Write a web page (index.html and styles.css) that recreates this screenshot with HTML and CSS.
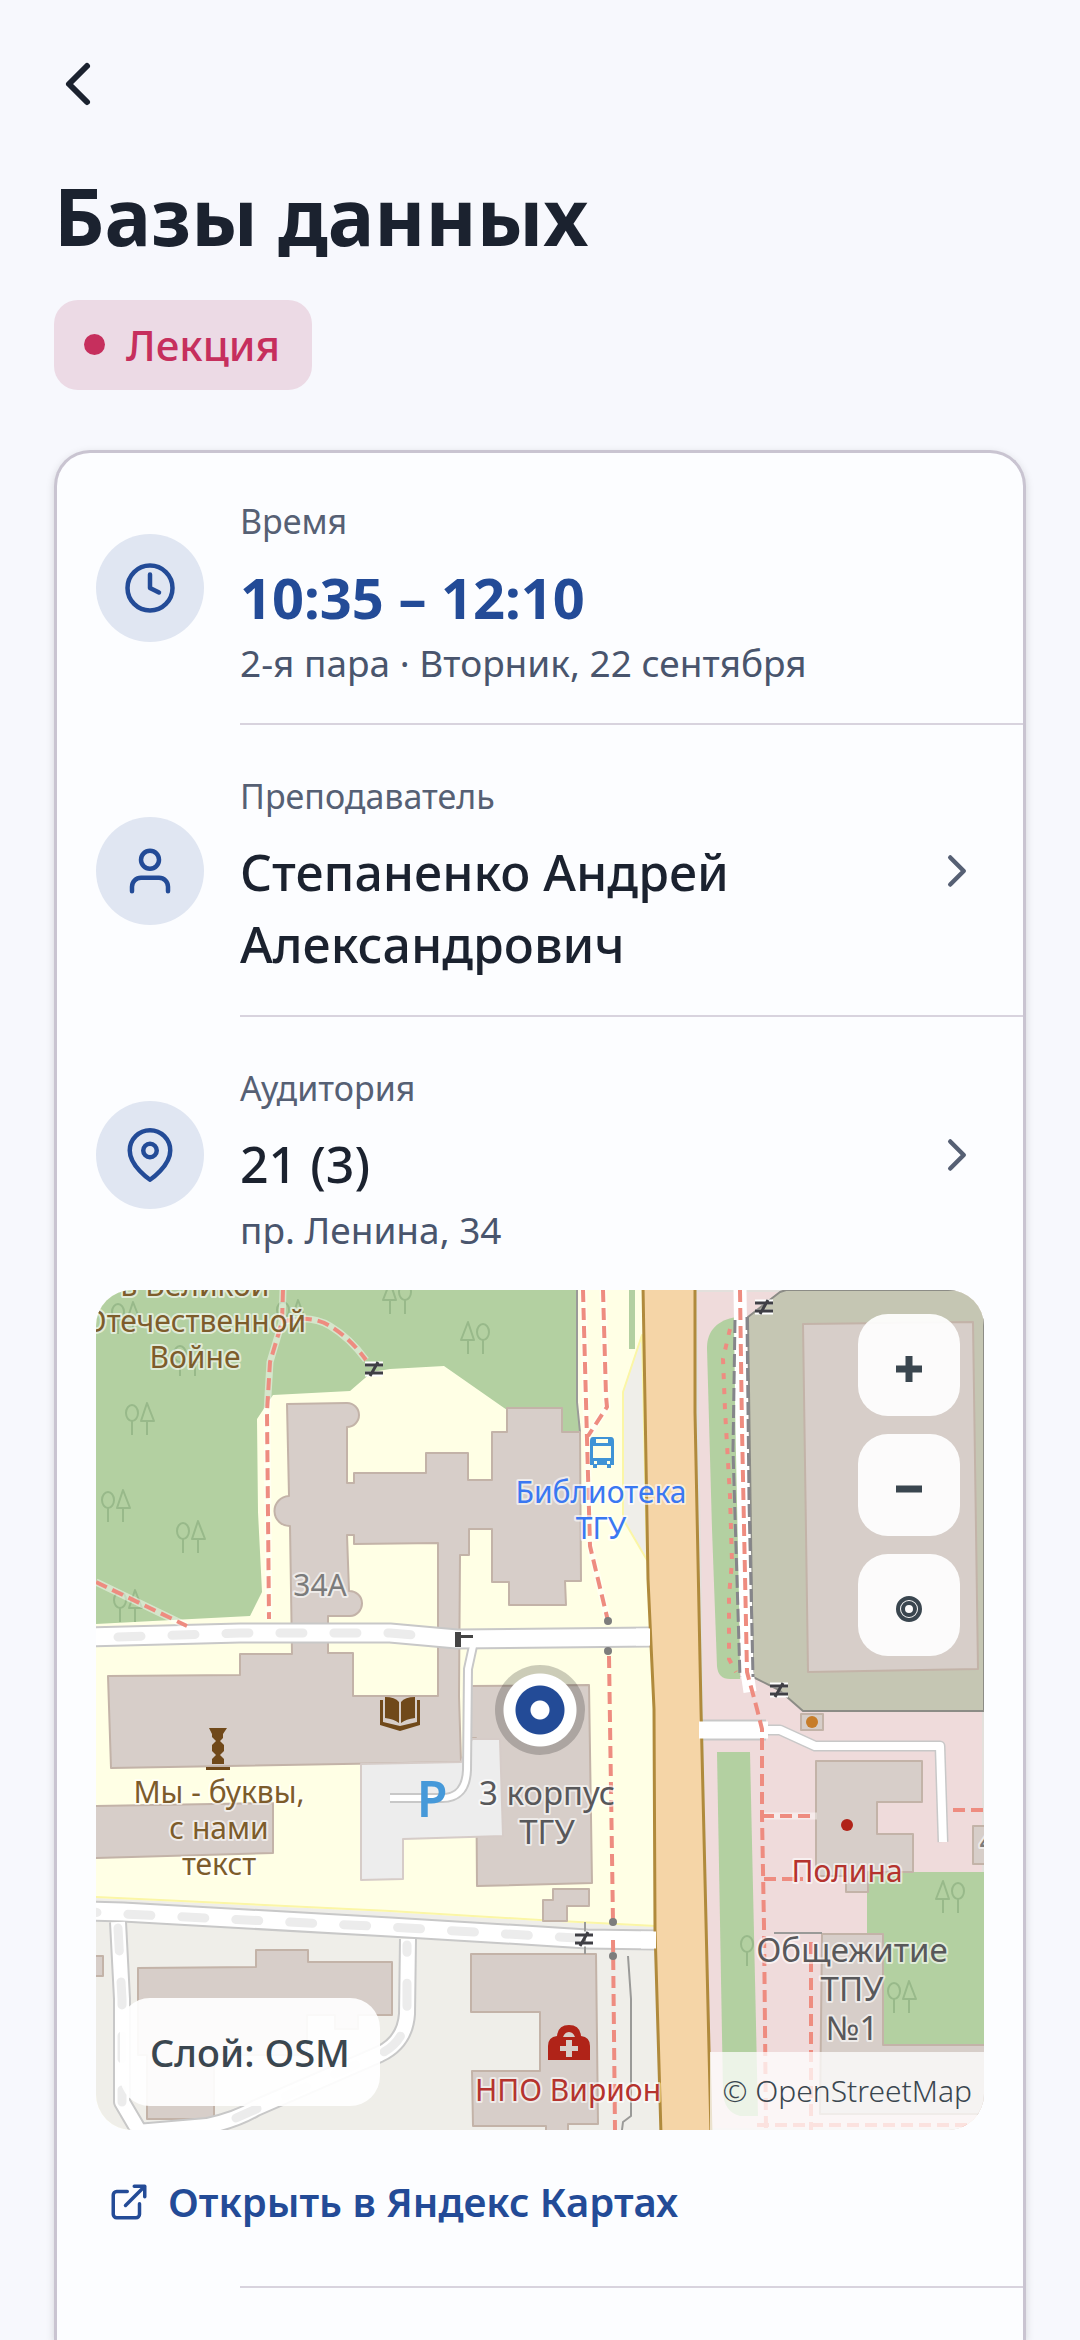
FILE: index.html
```html
<!DOCTYPE html>
<html lang="ru">
<head>
    <meta charset="UTF-8">
    <meta name="viewport" content="width=device-width, initial-scale=1.0">
    <title>Базы данных</title>
    <link rel="stylesheet" href="styles.css">
</head>
<body>
    <header class="page-header">
        <button class="back-button" type="button" aria-label="Назад">
            <svg viewBox="0 0 24 24"><path d="M15 18l-6-6 6-6"/></svg>
        </button>
        <h1>Базы данных</h1>
        <span class="badge">Лекция</span>
    </header>

    <main class="card">
        <section class="row">
            <div class="row-icon">
                <svg viewBox="0 0 24 24"><circle cx="12" cy="12" r="10"/><path d="M12 6v6l4 2"/></svg>
            </div>
            <div class="row-text">
                <p class="label">Время</p>
                <p class="value time">10:35 – 12:10</p>
                <p class="sub">2-я пара · Вторник, 22 сентября</p>
            </div>
        </section>

        <hr class="divider">

        <a class="row" href="#teacher">
            <div class="row-icon">
                <svg viewBox="0 0 24 24"><path d="M20 21v-2a4 4 0 0 0-4-4H8a4 4 0 0 0-4 4v2"/><circle cx="12" cy="7" r="4"/></svg>
            </div>
            <div class="row-text">
                <p class="label">Преподаватель</p>
                <p class="value">Степаненко Андрей Александрович</p>
            </div>
            <svg class="chevron" viewBox="0 0 24 24"><path d="M9 18l6-6-6-6"/></svg>
        </a>

        <hr class="divider">

        <a class="row" href="#room">
            <div class="row-icon">
                <svg viewBox="0 0 24 24"><path d="M21 10c0 7-9 13-9 13s-9-6-9-13a9 9 0 0 1 18 0z"/><circle cx="12" cy="10" r="3"/></svg>
            </div>
            <div class="row-text">
                <p class="label">Аудитория</p>
                <p class="value">21 (3)</p>
                <p class="sub">пр. Ленина, 34</p>
            </div>
            <svg class="chevron" viewBox="0 0 24 24"><path d="M9 18l6-6-6-6"/></svg>
        </a>

        <div class="map">
            <svg class="map-tiles" viewBox="0 0 888 840" preserveAspectRatio="xMidYMid slice">
                <defs>
                    <g id="trees" class="tree">
                        <ellipse rx="6" ry="8"/><path d="M0 8v14M15-10l-6 18h13zM15 8v14"/>
                    </g>
                    <g id="gate">
                        <path class="gate-bg" d="M-9-5H9M-9 5H9"/>
                        <path class="gate-line" d="M-9-4H9M-9 4H9M-4 7L4-7"/>
                    </g>
                </defs>

                <!-- участки -->
                <rect class="campus" width="888" height="840"/>
                <path class="land" d="M0 608L294 622 444 631 565 637V840H0z"/>
                <path class="campus-edge" d="M0 607L294 621 444 630 560 636"/>
                <path class="park" d="M0 0H481V110L484 142H411V120L348 76 294 79 276 82 254 101 177 105 161 129 162 222 166 302 154 326 57 331 0 334z"/>
                <path class="fence" d="M481 0V112L484 142"/>
                <path class="park" d="M533 0H539V59H533z"/>
                <path class="land campus-edge" d="M546 45L527 102V229L551 270z"/>
                <path class="pink" d="M599 0H888V840H612z"/>
                <path class="park" d="M640 27C622 30 611 40 611 58L616 239 621 376Q622 389 634 389H644L640 27z"/>
                <path class="stadium" d="M652 27L684 2 690 0H888V421H707L683 400 657 387z"/>
                <path class="park" d="M621 462H654L662 826H644Q628 822 627 802z"/>
                <path class="park" d="M771 582H888V755H786V644H771z"/>

                <!-- деревья -->
                <use href="#trees" x="22" y="22"/>
                <use href="#trees" x="187" y="20"/>
                <use href="#trees" x="84" y="64"/>
                <use href="#trees" x="36" y="123"/>
                <use href="#trees" x="12" y="210"/>
                <use href="#trees" x="87" y="241"/>
                <use href="#trees" x="24" y="310"/>
                <use href="#trees" x="798" y="701"/>
                <use href="#trees" transform="translate(309 2) scale(-1 1)"/>
                <use href="#trees" transform="translate(387 42) scale(-1 1)"/>
                <use href="#trees" transform="translate(862 601) scale(-1 1)"/>
                <ellipse class="tree" cx="651" cy="654" rx="6" ry="8"/>
                <path class="tree" d="M651 662v14"/>

                <!-- здания -->
                <g class="building">
                    <path fill-rule="evenodd" d="M191 114L251 113A12 12 0 0 1 251 137V193H258V183H330V163H372V190H396V142H411V118H466V142H484L485 291H469L470 315H413V292H396V239H373V265H364L363 406 365 472 15 478 12 386 144 385V364H196L194 236A15 15 0 0 1 193 206zM251 245L253 301A12 12 0 0 1 254 326H232V363H257V406H342V253L258 254V245z"/>
                    <path d="M374 396L493 395 496 593 381 596 380 448H374z"/>
                    <path d="M457 599H493V616H471V631H447V610H457z"/>
                    <path d="M-4 516L177 513V563L-4 568z"/>
                    <path d="M42 678L160 677V660H212V672H296V725H262V739H239V725H211V765H118V829H51V765H42z"/>
                    <path d="M-4 666H7V686H-4z"/>
                    <path d="M375 664H500L502 834H472V844H450V836H377L376 781H444V722H375z"/>
                    <path d="M707 34L877 32 882 379 712 382z"/>
                    <path d="M705 424h22v16h-22z"/>
                    <path d="M720 471H826V512H781V544H817V582H772V602H750V586H720z"/>
                    <path d="M726 644H787V755H892V824H724z"/>
                    <path d="M877 536H892V574H877z"/>
                </g>
                <path class="parking" d="M265 474L365 472 376 449H404L407 546 307 549V589L265 590z"/>

                <!-- проезды -->
                <g class="casing">
                    <path class="w18" d="M-8 347L144 343H294L361 349 554 347M-8 621L27 622 294 637 444 646 491 649 560 650"/>
                    <path class="w14" d="M22 632L26 709V812L46 846M41 842L111 836Q140 830 160 818L284 764Q309 752 311 724L312 649"/>
                    <path class="w6" d="M377 356L372 379 371 480Q370 508 346 508H294"/>
                    <path class="w8" d="M672 440H684L719 456H844L847 552"/>
                    <path class="w18" d="M604 440H670"/>
                </g>
                <g class="street">
                    <path class="w18" d="M-8 347L144 343H294L361 349 554 347M-8 621L27 622 294 637 444 646 491 649 560 650"/>
                    <path class="w14" d="M22 632L26 709V812L46 846M41 842L111 836Q140 830 160 818L284 764Q309 752 311 724L312 649"/>
                    <path class="w6" d="M377 356L372 379 371 480Q370 508 346 508H294"/>
                    <path class="w8" d="M672 440H684L719 456H844L847 552"/>
                </g>
                <path class="track" d="M22 347L144 343H294L340 347M-22 621L27 624 294 637 444 646 480 648"/>
                <path class="track" d="M22 638L26 709V812M140 828L284 764Q309 752 311 724V655"/>

                <!-- проспект -->
                <path class="avenue" d="M547-4L552 289 558 419 559 639 565 844H615L605 419 599 122V-4z"/>
                <path class="street w18" d="M540 347H554M545 650H560M603 440H672"/>

                <!-- дорожки -->
                <path class="path-halo" d="M187 0L186 32 174 72 171 122 173 329M186 32Q214 24 234 36T270 70M0 292L91 336"/>
                <path class="path-halo" d="M487 0L491 149 494 256 512 331M507 0L510 106 511 117 492 146M666 526H721"/>
                <path class="path-halo wide" d="M644 0L646 139 651 382 654 402"/>
                <path class="wall" d="M639 30L637 160 644 387M651 27L653 210 657 387"/>
                <path class="footway" d="M187 0L186 32 174 72 171 122 173 329M186 32Q214 24 234 36T270 70M0 292L91 336"/>
                <path class="footway" d="M487 0L491 149 494 256 512 331M507 0L510 106 511 117 492 146M513 366L517 632M517 650L519 840"/>
                <path class="footway" d="M644 0L646 139 651 382 661 419 666 439 666 526 668 636 670 840"/>
                <path class="footway" d="M666 526H716M668 589H707M715 652V840M857 520H888M661 835H888"/>
                <path class="dots" d="M634 39L627 69 629 120 634 206 636 272 633 306V369L640 382"/>
                <path class="fence" d="M532 666L535 709V826L527 832 526 840M678 643H726M489 632V664"/>

                <circle class="bollard" cx="512" cy="331" r="4"/>
                <circle class="bollard" cx="512" cy="361" r="4"/>
                <circle class="bollard" cx="517" cy="632" r="4"/>
                <circle class="bollard" cx="517" cy="666" r="4"/>
                <use href="#gate" x="278" y="79"/>
                <use href="#gate" x="668" y="17"/>
                <use href="#gate" x="683" y="400"/>
                <use href="#gate" x="488" y="649"/>
                <path class="barrier" d="M359 342h6v3h12v3h-12v9h-6z"/>

                <!-- значки -->
                <path class="bus" fill-rule="evenodd" d="M497 147h18q3 0 3 4v24h-3v3h-4v-3h-10v3h-4v-3h-3v-24q0-4 3-4zM500 149v4h12v-4zM497 156v12h18v-12zM498 171v3h3v-3zM511 171v3h3v-3z"/>
                <path class="brown" d="M113 438h18l-4 6v4l-3 3 4 4v6l-4 4 4 4v5h-12v-5l4-4-4-4v-6l4-4-4-4v-3zM110 477h24v3h-24z"/>
                <path class="brown" fill-rule="evenodd" d="M284 410h3v22l17 4 17-4v-22h3v25l-20 6-20-6zM289 407q10 0 14 5v21q-5-4-14-5zM305 412q4-5 14-5v21q-9 1-14 5z"/>
                <path class="medical" fill-rule="evenodd" d="M452 770V756Q452 747 461 746Q462 735 473 735T485 746Q494 747 494 756V770zM467 747h12q-2-5-6-5t-6 5zM470 750v6h-6v5h6v6h6v-6h6v-5h-6v-6z"/>
                <circle class="medical" cx="751" cy="535" r="6"/>
                <circle class="shop" cx="716" cy="432" r="6"/>

                <!-- подписи -->
                <g class="map-label place">
                    <text x="99" y="6">в Великой</text>
                    <text x="99" y="42">Отечественной</text>
                    <text x="99" y="78">Войне</text>
                    <text x="123" y="513">Мы - буквы,</text>
                    <text x="123" y="549">с нами</text>
                    <text x="123" y="585">текст</text>
                </g>
                <g class="map-label stop">
                    <text x="505" y="213">Библиотека</text>
                    <text x="505" y="249">ТГУ</text>
                </g>
                <g class="map-label house">
                    <text class="number" x="224" y="306">34А</text>
                    <text x="451" y="515">3 корпус</text>
                    <text x="451" y="554">ТГУ</text>
                    <text x="756" y="672">Общежитие</text>
                    <text x="756" y="711">ТПУ</text>
                    <text x="756" y="750">№1</text>
                    <text class="number" x="892" y="562">4</text>
                </g>
                <g class="map-label health">
                    <text x="472" y="811">НПО Вирион</text>
                    <text x="751" y="592">Полина</text>
                </g>
                <text class="parking-sign" x="336" y="527">P</text>
            </svg>

            <span class="marker"></span>

            <div class="map-controls">
                <button type="button" aria-label="Приблизить">
                    <svg viewBox="0 0 26 26"><path d="M13 0v26M0 13h26"/></svg>
                </button>
                <button type="button" aria-label="Отдалить">
                    <svg viewBox="0 0 26 26"><path d="M0 13h26"/></svg>
                </button>
                <button type="button" aria-label="К метке">
                    <svg class="target" viewBox="0 0 26 26"><circle cx="13" cy="13" r="11"/><circle cx="13" cy="13" r="6"/></svg>
                </button>
            </div>

            <button class="layer-button" type="button">Слой: OSM</button>
            <span class="attribution">© OpenStreetMap</span>
        </div>

        <a class="map-link" href="#yandex">
            <svg viewBox="0 0 24 24"><path d="M18 13v6a2 2 0 0 1-2 2H5a2 2 0 0 1-2-2V8a2 2 0 0 1 2-2h6M15 3h6v6M10 14L21 3"/></svg>
            Открыть в Яндекс Картах
        </a>

        <hr class="divider">
    </main>
</body>
</html>
```
FILE: styles.css
```css
* {
    margin: 0;
    padding: 0;
    box-sizing: border-box;
}

body {
    font-family: "Noto Sans", "Open Sans", sans-serif;
    display: flex;
    flex-direction: column;
    min-height: 100vh;
    padding: 48px 54px 0;
    background-color: #f7f8fd;
    color: #1b222f;
}

button {
    border: none;
    background: none;
    font-family: inherit;
    cursor: pointer;
}

a {
    color: inherit;
    text-decoration: none;
}

svg {
    display: block;
    fill: none;
    stroke: currentColor;
    stroke-width: 2;
    stroke-linecap: round;
    stroke-linejoin: round;
}

/* Шапка */
.page-header {
    display: flex;
    flex-direction: column;
    align-items: flex-start;
    margin-bottom: 60px;
}

.back-button {
    margin: 0 0 48px -12px;
    color: inherit;
}

.back-button svg {
    width: 72px;
    height: 72px;
}

h1 {
    font-size: 78px;
    line-height: 96px;
    font-weight: 700;
    margin-bottom: 36px;
}

.badge {
    display: flex;
    align-items: center;
    gap: 21px;
    height: 90px;
    padding: 0 32px 2px 30px;
    border-radius: 24px;
    background-color: #ecdae5;
    color: #c62f5d;
    font-size: 42px;
    font-weight: 500;
}

.badge::before {
    content: "";
    width: 21px;
    height: 21px;
    border-radius: 50%;
    background-color: #c62f5d;
}

/* Карточка */
.card {
    flex: 1;
    border: 3px solid #c9c4d1;
    border-bottom: none;
    border-radius: 36px 36px 0 0;
    background-color: #fcfdff;
    box-shadow: 0 3px 9px rgba(0, 0, 0, 0.15);
}

.row {
    display: flex;
    align-items: center;
    gap: 36px;
    padding: 37px 39px 35px;
}

.row:first-child {
    padding-top: 34px;
}

.row-icon {
    display: flex;
    align-items: center;
    justify-content: center;
    flex: none;
    width: 108px;
    height: 108px;
    border-radius: 50%;
    background-color: #e0e6f2;
    color: #234b97;
}

.row-icon svg,
.chevron {
    width: 54px;
    height: 54px;
}

.row-text {
    flex: 1;
    padding-top: 9px;
}

.label {
    margin-bottom: 14px;
    font-size: 34px;
    line-height: 51px;
    color: #566074;
}

.value {
    font-size: 50px;
    line-height: 72px;
    font-weight: 500;
}

.time {
    font-size: 56px;
    font-weight: 700;
    color: #234b97;
}

.sub {
    margin-top: 4px;
    font-size: 37px;
    line-height: 51px;
    color: #49556d;
}

.chevron {
    flex: none;
    color: #566074;
}

.divider {
    height: 2px;
    margin-left: 183px;
    border: none;
    background-color: #d8d3de;
}

/* Карта */
.map {
    position: relative;
    height: 840px;
    margin: 0 39px;
    border-radius: 36px;
    overflow: hidden;
}

.map-tiles {
    width: 100%;
    height: 100%;
    stroke: none;
    stroke-linecap: butt;
}

.campus { fill: #ffffe5; }
.campus-edge { stroke: #fbf6a6; }
.land { fill: #efeee9; }
.park { fill: #b3d0a1; }
.pink { fill: #efdbdb; stroke: #e3e0dc; stroke-width: 4; }
.stadium { fill: #c5c6b3; stroke: #8c8c86; }
.parking { fill: #ededed; stroke: #d6ccc8; }
.building { fill: #d7cec9; stroke: #c3b3a8; }
.avenue { fill: #f5d5a7; stroke: #b08a3c; stroke-width: 3; }
.tree { fill: none; stroke: #98b98a; }
.fence { stroke: #9a9a98; }

.w6 { stroke-width: 6; }
.w8 { stroke-width: 8; }
.w14 { stroke-width: 14; }
.w18 { stroke-width: 17; }
.street { stroke: #ffffff; }
.casing { stroke: #c8c8c8; }
.casing .w6 { stroke-width: 10; }
.casing .w8 { stroke-width: 11; }
.casing .w14 { stroke-width: 18; }
.casing .w18 { stroke-width: 21; }

.track {
    stroke: #ececec;
    stroke-width: 9;
    stroke-linecap: round;
    stroke-dasharray: 23 31;
}

.path-halo {
    stroke: rgba(255, 255, 255, 0.45);
    stroke-width: 7;
}

.path-halo.wide {
    stroke: #ffffff;
    stroke-width: 13;
}

.wall {
    stroke: #85858a;
    stroke-width: 3;
    stroke-dasharray: 13 4;
}

.footway {
    stroke: #ee8c80;
    stroke-width: 4;
    stroke-dasharray: 12 6;
}

.dots {
    stroke: #ee8c80;
    stroke-width: 4;
    stroke-dasharray: 6 9;
}

.bollard { fill: #7d7d7d; }
.barrier { fill: #444444; }
.gate-bg { stroke: #ffffff; stroke-width: 5; }
.gate-line { stroke: #3f3f45; stroke-width: 3; }
.bus { fill: #3f93d6; }
.brown { fill: #70491a; }
.medical { fill: #b02318; }
.shop { fill: #c77d2a; }

.map-label {
    font-size: 30px;
    text-anchor: middle;
    stroke: rgba(255, 255, 255, 0.6);
    stroke-width: 4;
    paint-order: stroke;
}

.place { fill: #7d5c2b; }
.stop { fill: #3a78f2; }
.house { fill: #58585a; font-size: 33px; }
.number { fill: #7b7b7b; font-size: 30px; }
.health { fill: #b5332e; }

.parking-sign {
    fill: #4699d9;
    font-size: 50px;
    font-weight: 600;
    text-anchor: middle;
}

.marker {
    position: absolute;
    top: 50%;
    left: 50%;
    width: 90px;
    height: 90px;
    border-radius: 50%;
    transform: translate(-50%, -50%);
    background: radial-gradient(circle, #ffffff 9px, #234b97 10px, #234b97 24px, #ffffff 25px, #ffffff 36px, rgba(0, 0, 0, 0.2) 37px);
}

.map-controls {
    position: absolute;
    top: 24px;
    right: 24px;
    display: flex;
    flex-direction: column;
    gap: 18px;
}

.map-controls button {
    display: flex;
    align-items: center;
    justify-content: center;
    width: 102px;
    height: 102px;
    padding-top: 7px;
    border-radius: 30px;
    background-color: rgba(255, 255, 255, 0.92);
    color: #3a464f;
}

.map-controls svg {
    width: 26px;
    height: 26px;
    stroke-width: 7;
    stroke-linecap: butt;
}

.map-controls .target {
    stroke-width: 4;
}

.layer-button {
    position: absolute;
    left: 24px;
    bottom: 24px;
    height: 108px;
    padding: 0 30px;
    border-radius: 30px;
    background-color: rgba(255, 255, 255, 0.92);
    color: #3a464f;
    font-size: 38px;
    font-weight: 500;
}

.attribution {
    position: absolute;
    right: 0;
    bottom: 0;
    padding: 0 12px;
    background-color: rgba(255, 255, 255, 0.75);
    color: #3a464f;
    font-size: 30px;
    line-height: 78px;
    font-weight: 300;
}

.map-link {
    display: flex;
    align-items: center;
    gap: 18px;
    padding: 42px 51px 54px;
    color: #234b97;
    font-size: 40px;
    line-height: 60px;
    font-weight: 600;
}

.map-link svg {
    width: 42px;
    height: 42px;
}
```
